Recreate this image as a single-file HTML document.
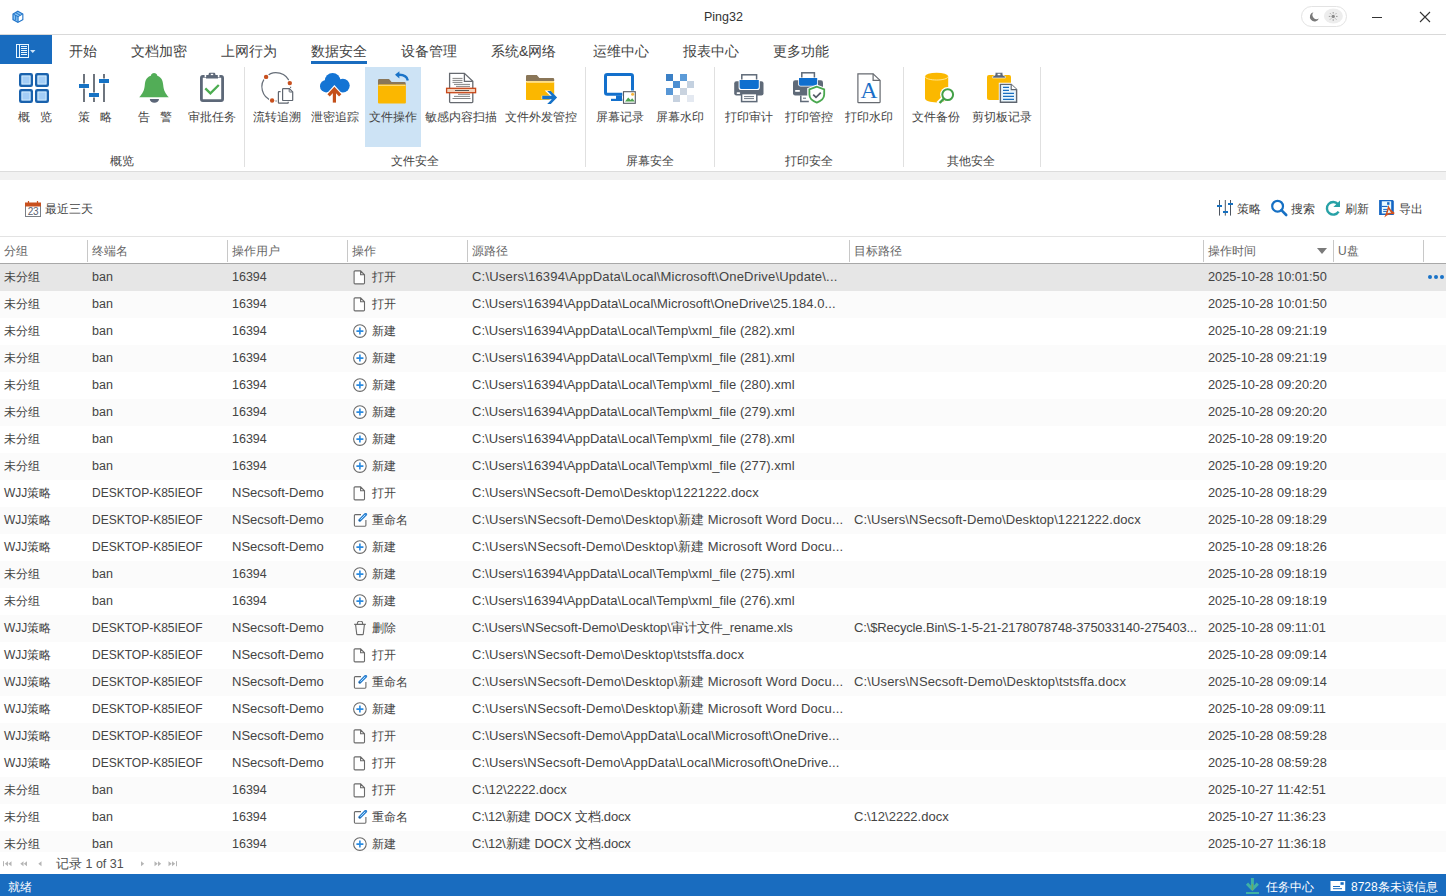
<!DOCTYPE html>
<html><head><meta charset="utf-8"><title>Ping32</title>
<style>
*{box-sizing:border-box;margin:0;padding:0}
html,body{width:1446px;height:896px;overflow:hidden;background:#fff;font-family:"Liberation Sans",sans-serif;color:#333}
.abs{position:absolute}
#title{position:absolute;left:0;top:0;width:1446px;height:35px;background:#fff;border-bottom:1px solid #d9d9d9}
#tabs{position:absolute;left:0;top:35px;width:1446px;height:29px;background:#fff}
.tab{position:absolute;top:43px;font-size:14px;line-height:16px;color:#444;white-space:nowrap}
#filebtn{position:absolute;left:0;top:35px;width:52px;height:29px;background:#196cbf}
#ribbon{position:absolute;left:0;top:64px;width:1446px;height:108px;background:#fff;border-bottom:1px solid #dcdcdc}
.sep{position:absolute;top:67px;width:1px;height:100px;background:#e0e0e0}
.lbl{position:absolute;top:109px;font-size:12px;line-height:16px;color:#444;white-space:nowrap}
.glbl{position:absolute;top:153px;font-size:12px;line-height:16px;color:#444;white-space:nowrap}
.ico{position:absolute;top:70px}
#band{position:absolute;left:0;top:172px;width:1446px;height:8px;background:#f1f1f1}
#toolbar{position:absolute;left:0;top:180px;width:1446px;height:56px;background:#fff}
.tb{position:absolute;top:201px;font-size:12px;line-height:16px;color:#444;white-space:nowrap}
#thead{position:absolute;left:0;top:236px;width:1446px;height:28px;background:#fff;border-top:1px solid #e3e3e3;border-bottom:1px solid #a8a8a8}
.th{position:absolute;top:6px;font-size:12px;line-height:16px;color:#666;white-space:nowrap}
.hsep{position:absolute;top:3px;width:1px;height:22px;background:#c8c8c8}
.row{position:absolute;left:0;width:1446px;height:27px}
.c{position:absolute;top:5px;font-size:12.5px;line-height:16px;color:#444;white-space:pre}
.cp{font-size:13px}
.dk{font-size:12px}
.ns{font-size:13px}
.co{font-size:12px}
.cd{font-size:12.8px}
.cg{font-size:12px}
.rb{letter-spacing:-0.15px}
.ic{position:absolute;top:6px;line-height:0}
.dots{position:absolute;left:1428px;top:11px}
.dots i{display:inline-block;width:4px;height:4px;border-radius:2px;background:#1a73c8;margin-right:2px;vertical-align:top}
#rowsclip{position:absolute;left:0;top:264px;width:1446px;height:588px;overflow:hidden}
#rowsclip .row{}
#pager{position:absolute;left:0;top:852px;width:1446px;height:22px;background:#fff}
#status{position:absolute;left:0;top:874px;width:1446px;height:22px;background:#196cbf;color:#fff}
.st{position:absolute;top:5px;font-size:12px;line-height:16px;color:#fff;white-space:nowrap}
</style></head>
<body>
<div id="title">
  <svg class="abs" style="left:0;top:0" width="30" height="30" viewBox="0 0 30 30"><path d="M17.9 11.2L22.8 14V19.6L17.9 22.4L13 19.6V14Z" fill="#86c3f4" stroke="#2374c8" stroke-width="1.2"/><path d="M18.6 16.6L22.2 14.6V19.2L18.6 21.3Z" fill="#fff"/><path d="M15.7 15.2v5M18 16.4v5.6M13.4 14.2l4.6 2.4l4.6-2.5M15.5 12.6l4.6 2.6" fill="none" stroke="#2374c8" stroke-width="1"/></svg>
  <div class="abs" style="left:704px;top:9px;font-size:12.5px;line-height:16px;color:#333">Ping32</div>
  <div class="abs" style="left:1301px;top:6px;width:46px;height:21px;border:1px solid #e3e3e3;border-radius:11px;background:#fff"></div>
  <svg class="abs" style="left:1300px;top:0" width="50" height="34" viewBox="1300 0 50 34">
<ellipse cx="1333.4" cy="16" rx="9.5" ry="7.5" fill="#ededed"/>
<path d="M1313.4 12.2A4.7 4.7 0 1 0 1318.9 18.6A4.3 4.3 0 0 1 1313.4 12.2z" fill="#7a7a7a"/>
<circle cx="1333.2" cy="16.4" r="1.7" fill="#8a8a8a"/>
<g stroke="#9a9a9a" stroke-width="1"><path d="M1333.2 12v1.6M1333.2 19.2v1.6M1328.8 16.4h1.6M1336 16.4h1.6M1330.1 13.3l1 1M1335.3 18.5l1 1M1330.1 19.5l1-1M1335.3 14.3l1-1"/></g>
</svg>
<div class="abs" style="left:1372px;top:17px;width:10px;height:1px;background:#333"></div>
  <svg class="abs" style="left:1419px;top:11px" width="12" height="12" viewBox="0 0 12 12"><path d="M1 1L11 11M11 1L1 11" stroke="#333" stroke-width="1.1"/></svg>
</div>

<div id="tabs"></div>
<div id="filebtn">
  <svg class="abs" style="left:0;top:0" width="52" height="29" viewBox="0 35 52 29"><rect x="16.5" y="44.5" width="12" height="13" fill="none" stroke="#eaf8ff" stroke-width="1"/><path d="M19.5 45v12" stroke="#eaf8ff" stroke-width="1"/><path d="M21 46.5h6M21 48.5h6M21 50.5h6M21 52.5h6M21 54.5h6" stroke="#eaf8ff" stroke-width="1"/><path d="M30 50h5.5l-2.75 3z" fill="#cfe4f8"/></svg>
</div>
<div class="tab" style="left:69px">开始</div>
<div class="tab" style="left:131px">文档加密</div>
<div class="tab" style="left:221px">上网行为</div>
<div class="tab" style="left:311px">数据安全</div>
<div class="abs" style="left:311px;top:61px;width:56px;height:3px;background:#196cbf"></div>
<div class="tab" style="left:401px">设备管理</div>
<div class="tab" style="left:491px">系统&amp;网络</div>
<div class="tab" style="left:593px">运维中心</div>
<div class="tab" style="left:683px">报表中心</div>
<div class="tab" style="left:773px">更多功能</div>

<div id="ribbon"></div>
<div class="abs" style="left:365px;top:67px;width:56px;height:80px;background:#cde3f5"></div>
<div class="sep" style="left:244px"></div>
<div class="sep" style="left:585px"></div>
<div class="sep" style="left:714px"></div>
<div class="sep" style="left:903px"></div>
<div class="sep" style="left:1040px"></div>

<svg class="abs" style="left:0;top:0" width="1100" height="110" viewBox="0 0 1100 110">
<!-- 概览 grid -->
<g fill="#a3cdf6" stroke="#1a62ad" stroke-width="2.4">
<rect x="20.2" y="74.2" width="11.6" height="11.6" rx="1"/>
<rect x="36.2" y="74.2" width="11.6" height="11.6" rx="1"/>
<rect x="20.2" y="90.2" width="11.6" height="11.6" rx="1"/>
<rect x="36.2" y="90.2" width="11.6" height="11.6" rx="1"/>
</g>
<g fill="none" stroke="#d8f1ff" stroke-width="0.8">
<rect x="22" y="76" width="8" height="8"/><rect x="38" y="76" width="8" height="8"/>
<rect x="22" y="92" width="8" height="8"/><rect x="38" y="92" width="8" height="8"/>
</g>
<!-- 策略 sliders -->
<g stroke="#5f6670" stroke-width="1.8">
<path d="M84 74v9.5M84 88.5v13.5M94 74v18.5M94 97.5v4.5M104 74v4.5M104 83.5v18.5"/>
</g>
<g fill="#1672c4">
<rect x="79" y="84" width="10" height="4"/>
<rect x="89" y="93" width="10" height="4"/>
<rect x="99" y="79" width="10" height="4"/>
</g>
<!-- 告警 bell -->
<path d="M154 73.2c-1.3 0-2.3 0.9-2.4 2.3c-4.6 1.2-6.4 4.5-6.8 9.4c-0.5 5.6-2.2 8.6-5.6 12.3h29.6c-3.4-3.7-5.1-6.7-5.6-12.3c-0.4-4.9-2.2-8.2-6.8-9.4c-0.1-1.4-1.1-2.3-2.4-2.3z" fill="#52ad57"/>
<circle cx="154.1" cy="76.4" r="3.2" fill="#52ad57"/>
<path d="M149.8 99.1h9.2a4.6 3.6 0 0 1-9.2 0z" fill="#5b6678"/>
<!-- 审批任务 clipboard -->
<rect x="201.4" y="76.4" width="21.2" height="24.2" rx="1.5" fill="#fff" stroke="#5d6878" stroke-width="2.8"/>
<rect x="204.6" y="74.6" width="1.6" height="2.6" fill="#fff"/>
<rect x="217.8" y="74.6" width="1.6" height="2.6" fill="#fff"/>
<path d="M206 78.4H218V77.2L215.6 75.6L215.2 73.5Q215 72.7 214.3 72.7H209.7Q209 72.7 208.8 73.5L208.4 75.6L206 77.2Z" fill="#5d6878"/>
<rect x="210.8" y="73.8" width="2.4" height="1.3" fill="#fff"/>
<path d="M205.3 88.4l5.1 5 8.4-8.4" fill="none" stroke="#4cad50" stroke-width="2.3"/>
<!-- 流转追溯 -->
<path d="M272.1 100.5A14.2 14.2 0 1 1 289.8 83.1" fill="none" stroke="#666e78" stroke-width="1.25"/>
<g fill="#fff"><circle cx="266.1" cy="76.9" r="3.2"/><circle cx="289.8" cy="83.1" r="3.2"/><circle cx="272.1" cy="100.5" r="3.2"/></g>
<g fill="#c8501e"><circle cx="266.1" cy="76.9" r="2.2"/><circle cx="289.8" cy="83.1" r="2.2"/><circle cx="272.1" cy="100.5" r="2.2"/></g>
<path d="M290.6 86.8v1.2M275.4 101h1.4" stroke="#666e78" stroke-width="1.1"/>
<path d="M280.6 91.6h-1.6a0.6 0.6 0 0 0-0.6 0.6v10.4a0.6 0.6 0 0 0 0.6 0.6h8.6a0.6 0.6 0 0 0 0.6-0.6v-0.8" fill="none" stroke="#5f6670" stroke-width="1.2"/>
<path d="M283.2 88.6h6.2l3.3 3.3v8a0.6 0.6 0 0 1-0.6 0.6h-8.9a0.6 0.6 0 0 1-0.6-0.6v-10.7a0.6 0.6 0 0 1 0.6-0.6z" fill="#fff" stroke="#5f6670" stroke-width="1.2"/>
<path d="M289.2 88.8v2.6a0.6 0.6 0 0 0 0.6 0.6h2.6" fill="none" stroke="#5f6670" stroke-width="1"/>
<!-- 泄密追踪 cloud -->
<g fill="#1474d4">
<circle cx="332.6" cy="80.8" r="7.8"/>
<circle cx="342.8" cy="85.6" r="6.9"/>
<circle cx="326.2" cy="86.2" r="6.2"/>
<rect x="326" y="84" width="17" height="8" rx="3"/>
</g>
<path d="M327.6 96.6L334.4 89.2L341.2 96.6M334.4 90v4" fill="none" stroke="#fff" stroke-width="5.6" stroke-linejoin="miter" stroke-miterlimit="10"/>
<path d="M328.6 95.4L334.4 89.2L340.2 95.4" fill="none" stroke="#c4501a" stroke-width="3.2" stroke-linejoin="miter" stroke-miterlimit="10"/>
<path d="M334.4 89v13.6" stroke="#c4501a" stroke-width="3.2"/>
<!-- 文件操作 folder -->
<path d="M378 80.2a1.2 1.2 0 0 1 1.2-1.2h9.8l2.6 3h12.9a1.2 1.2 0 0 1 1.2 1.2v2h-27.7z" fill="#8a7658"/>
<rect x="378" y="84.6" width="27.9" height="18.8" rx="1" fill="#fbb700"/>
<rect x="378.5" y="84.8" width="27" height="0.9" fill="#ffe9a8"/>
<path d="M407.8 80.4c-0.8-3.6-3.6-5.6-8.4-5.6h-2.6" fill="none" stroke="#1a73c8" stroke-width="2.4"/>
<path d="M395 74.8l4.4-3.6v7.2z" fill="#1a73c8"/>
<!-- 敏感内容扫描 -->
<path d="M449.6 73.4h14.8l8.4 8v20.4a0.8 0.8 0 0 1-0.8 0.8h-21.6a0.8 0.8 0 0 1-0.8-0.8z" fill="#fff" stroke="#666a70" stroke-width="1.3"/>
<path d="M464.4 73.4v8h8.4" fill="none" stroke="#666a70" stroke-width="1.3"/>
<g stroke="#777" stroke-width="0.9"><path d="M452.5 78.4h10M452.5 80.4h10M452.5 82.4h10M454 84.4h16M456 86.4h14M458 94.3h12M454 96.4h16M452.5 98.5h18"/></g>
<rect x="446.6" y="88.3" width="29" height="4.4" fill="#f2d2bb" stroke="#c8481a" stroke-width="1.3"/>
<path d="M455 90.5h14" stroke="#555" stroke-width="1"/>
<!-- 文件外发管控 -->
<path d="M526 76.2a1.2 1.2 0 0 1 1.2-1.2h9.6l2.6 3h13.6a1.2 1.2 0 0 1 1.2 1.2v1.8h-28.2z" fill="#8a7658"/>
<rect x="526" y="81.6" width="28.2" height="18.4" rx="0.8" fill="#fbb700"/>
<rect x="526.5" y="81.8" width="27.4" height="0.9" fill="#ffe9a8"/>
<path d="M541.6 99.3h8.5l-5.4 5.2h5.2l7.6-7-7.6-7h-5.2l5.4 5.2h-8.5z" fill="#fff"/>
<path d="M542.2 95.8h9.6l-4.6-4.7h3.6l6.3 6.4-6.3 6.4h-3.6l4.6-4.7h-9.6z" fill="#1672c8"/>
<!-- 屏幕记录 monitor -->
<rect x="605.5" y="74.5" width="27" height="19.8" rx="1.8" fill="#fff" stroke="#1370cc" stroke-width="3"/>
<rect x="616" y="95.5" width="6" height="3.5" fill="#1370cc"/>
<rect x="611" y="98.8" width="12" height="2.2" fill="#1370cc"/>
<rect x="622.3" y="90.5" width="14" height="13.6" fill="#fff"/>
<rect x="623.5" y="91.7" width="11.8" height="11.6" fill="#fff" stroke="#555b64" stroke-width="1.1"/>
<circle cx="632.6" cy="94.2" r="1.5" fill="#f6b53a"/>
<path d="M625 101.6l3.2-4.2 2.4 2.6 1.6-1.8 2.6 3.4z" fill="#4ea34f"/>
<!-- 屏幕水印 checker -->
<rect x="666" y="74" width="7" height="7" fill="#3b80c6"/>
<rect x="680" y="74" width="7" height="7" fill="#5c9bd8"/>
<rect x="673" y="81" width="7" height="7" fill="#4d8fd2"/>
<rect x="687" y="81" width="7" height="7" fill="#c4d1e0"/>
<rect x="666" y="88" width="7" height="7" fill="#5897d6"/>
<rect x="680" y="88" width="7" height="7" fill="#c9d3df"/>
<rect x="673" y="95" width="7" height="7" fill="#c6d1df"/>
<rect x="687" y="95" width="7" height="7" fill="#e4e9f1"/>
<!-- 打印审计 printer -->
<rect x="741.8" y="74.8" width="14.8" height="7" fill="#fff" stroke="#5f6a78" stroke-width="1.5"/>
<rect x="734.2" y="81.3" width="29.3" height="14.1" rx="2.2" fill="#5f6a78"/>
<path d="M738.6 79.4h21.2v8a2.6 2.6 0 0 1-2.6 2.6h-16a2.6 2.6 0 0 1-2.6-2.6z" fill="#fff"/>
<path d="M739.6 80h19.2v7.2a1.8 1.8 0 0 1-1.8 1.8h-15.6a1.8 1.8 0 0 1-1.8-1.8z" fill="#0f6fcf"/>
<rect x="736.6" y="92.2" width="3.6" height="1.8" rx="0.8" fill="#fff"/>
<rect x="741.6" y="93.6" width="15.2" height="8" fill="#fff" stroke="#5f6a78" stroke-width="1.5"/>
<path d="M744 96.6h10M744 98.6h10" stroke="#5f6a78" stroke-width="0.9"/>
<!-- 打印管控 printer + shield -->
<rect x="801.8" y="72.8" width="12.6" height="7" fill="#fff" stroke="#5f6a78" stroke-width="1.5"/>
<rect x="793" y="80.2" width="30" height="15.2" rx="2.2" fill="#5f6a78"/>
<path d="M798.2 77.4h19.8v6.8a2.4 2.4 0 0 1-2.4 2.4h-15a2.4 2.4 0 0 1-2.4-2.4z" fill="#fff"/>
<path d="M799 78h18.2v6.2a1.6 1.6 0 0 1-1.6 1.6h-15a1.6 1.6 0 0 1-1.6-1.6z" fill="#0f6fcf"/>
<rect x="795.2" y="90" width="4.6" height="1.8" fill="#fff"/>
<path d="M800.8 95.4v6.2h8" fill="none" stroke="#5f6a78" stroke-width="1.5"/>
<path d="M803 98.2h3" stroke="#5f6a78" stroke-width="1"/>
<path d="M816.8 84.6l-9.6 3.6v6.2c0 5 4 8.2 9.6 10.2c5.6-2 9.6-5.2 9.6-10.2v-6.2z" fill="#fff"/>
<path d="M816.8 86.6l-7.4 2.8v5.2c0 3.8 3 6.4 7.4 8c4.4-1.6 7.4-4.2 7.4-8v-5.2z" fill="#fff" stroke="#4aa84f" stroke-width="1.8"/>
<path d="M813.2 94.6l2.8 2.8 4.8-4.8" fill="none" stroke="#555b68" stroke-width="1.7"/>
<!-- 打印水印 doc A -->
<path d="M857.9 73.8h15.2l7 6.6v21.6a0.6 0.6 0 0 1-0.6 0.6h-21a0.6 0.6 0 0 1-0.6-0.6z" fill="#fff" stroke="#666a70" stroke-width="1.2"/>
<path d="M873.1 73.8v6.6h7" fill="none" stroke="#666a70" stroke-width="1.2"/>
<text x="869" y="97.8" text-anchor="middle" font-family="Liberation Serif" font-size="23.5" fill="#1a6fc8">A</text>
<!-- 文件备份 database -->
<path d="M925 76.4v22.2c0 2.2 5.2 3.8 11.6 3.8s11.6-1.6 11.6-3.8v-22.2z" fill="#fbb800"/>
<ellipse cx="936.6" cy="76.4" rx="11.6" ry="3.6" fill="#fbb800"/>
<path d="M925.2 76.6c0 2 5.2 3.4 11.4 3.4s11.4-1.4 11.4-3.4" fill="none" stroke="#ffeaa0" stroke-width="0.9"/>
<circle cx="947.7" cy="94.6" r="7.6" fill="#fff"/>
<path d="M938 103.6l5-5" stroke="#fff" stroke-width="4.5"/>
<circle cx="947.7" cy="94.6" r="5.4" fill="#fff" stroke="#43a047" stroke-width="2"/>
<path d="M939.6 103l4.4-4.4" stroke="#43a047" stroke-width="2.4"/>
<!-- 剪切板记录 -->
<rect x="987" y="75" width="24" height="25" rx="2" fill="#fbb800"/>
<path d="M992.6 78h12.8v-1.6l-2.5-1.2v-1.4a1.2 1.2 0 0 0-1.2-1.2h-5.4a1.2 1.2 0 0 0-1.2 1.2v1.4l-2.5 1.2z" fill="#5d6878" stroke="#fff" stroke-width="0.6"/>
<rect x="997.6" y="73.8" width="2.8" height="1.4" fill="#fff"/>
<path d="M998.8 82.8h12.8l6.2 6v14.6h-19z" fill="#fff"/>
<path d="M1000.4 84.4h10.8l5.4 5.2v12.6h-16.2z" fill="#eaf6fd" stroke="#5f6670" stroke-width="1.4"/>
<path d="M1011.2 84.4v5.2h5.4" fill="#fff" stroke="#5f6670" stroke-width="1.1"/>
<g stroke="#1a6fc0" stroke-width="1.2"><path d="M1003 87.4h6M1003 90.4h6M1003 93.4h11M1003 96.4h11M1003 99.4h11"/></g>
</svg>


<div class="lbl" style="left:18px">概&nbsp;&nbsp;&nbsp;览</div>
<div class="lbl" style="left:78px">策&nbsp;&nbsp;&nbsp;略</div>
<div class="lbl" style="left:138px">告&nbsp;&nbsp;&nbsp;警</div>
<div class="lbl" style="left:188px">审批任务</div>
<div class="lbl" style="left:253px">流转追溯</div>
<div class="lbl" style="left:311px">泄密追踪</div>
<div class="lbl" style="left:369px">文件操作</div>
<div class="lbl" style="left:425px">敏感内容扫描</div>
<div class="lbl" style="left:505px">文件外发管控</div>
<div class="lbl" style="left:596px">屏幕记录</div>
<div class="lbl" style="left:656px">屏幕水印</div>
<div class="lbl" style="left:725px">打印审计</div>
<div class="lbl" style="left:785px">打印管控</div>
<div class="lbl" style="left:845px">打印水印</div>
<div class="lbl" style="left:912px">文件备份</div>
<div class="lbl" style="left:972px">剪切板记录</div>

<div class="glbl" style="left:110px">概览</div>
<div class="glbl" style="left:391px">文件安全</div>
<div class="glbl" style="left:626px">屏幕安全</div>
<div class="glbl" style="left:785px">打印安全</div>
<div class="glbl" style="left:947px">其他安全</div>

<div id="band"></div>
<div id="toolbar"></div>
<svg class="abs" style="left:0;top:180px" width="1446" height="56" viewBox="0 180 1446 56">
<!-- calendar -->
<rect x="25.5" y="203.5" width="15" height="13" fill="#fff" stroke="#7a7f86" stroke-width="1"/>
<rect x="25" y="202.5" width="16" height="4" fill="#c8501e"/>
<path d="M28.5 201v3M37.5 201v3" stroke="#c8501e" stroke-width="1.2"/>
<text x="33" y="215.2" text-anchor="middle" font-family="Liberation Sans" font-size="10" fill="#5a6270" letter-spacing="-0.3">23</text>
<!-- sliders small -->
<g stroke="#4d5560" stroke-width="1"><path d="M1219.5 200v15.6M1225.3 200v15.6M1230.5 200v15.6"/></g>
<g fill="#1670c0"><rect x="1217" y="205" width="5" height="2"/><rect x="1223" y="211" width="5" height="2"/><rect x="1228" y="203" width="5" height="2"/></g>
<!-- search -->
<circle cx="1277.6" cy="206.2" r="5.4" fill="none" stroke="#1670c4" stroke-width="2.2"/>
<path d="M1281.4 210.2l4.8 4.8" stroke="#1670c4" stroke-width="2.6" stroke-linecap="round"/>
<!-- refresh -->
<path d="M1338 204.2A6.3 6.3 0 1 0 1338.6 211.6" fill="none" stroke="#27a1a6" stroke-width="2.4"/>
<path d="M1340 200.4v6.6h-6.6z" fill="#27a1a6"/>
<!-- export floppy -->
<path d="M1379.1 200h13.6l1.1 1.1v13.9h-14.7z" fill="#1466c4"/>
<rect x="1381.8" y="201.3" width="9.4" height="12.2" fill="#e9fbff"/>
<rect x="1381.8" y="205.9" width="5.8" height="1.1" fill="#1466c4"/>
<rect x="1387.1" y="202.2" width="2.4" height="2.6" fill="#1466c4"/>
<path d="M1383.2 209.4h4.4M1383.2 211.4h4" stroke="#1466c4" stroke-width="1"/>
<path d="M1386 215.2C1387.2 212 1388 209.4 1388.5 207.4C1389.5 209.8 1391.6 212.2 1394.2 213.5C1391.4 213 1388.2 213.4 1386 215.2z" fill="none" stroke="#d4521c" stroke-width="1.5"/>
</svg>
<div class="tb" style="left:45px">最近三天</div>
<div class="tb" style="left:1237px">策略</div>
<div class="tb" style="left:1291px">搜索</div>
<div class="tb" style="left:1345px">刷新</div>
<div class="tb" style="left:1399px">导出</div>


<div id="thead">
  <div class="th" style="left:4px">分组</div>
  <div class="hsep" style="left:87px"></div>
  <div class="th" style="left:92px">终端名</div>
  <div class="hsep" style="left:227px"></div>
  <div class="th" style="left:232px">操作用户</div>
  <div class="hsep" style="left:347px"></div>
  <div class="th" style="left:352px">操作</div>
  <div class="hsep" style="left:467px"></div>
  <div class="th" style="left:472px">源路径</div>
  <div class="hsep" style="left:849px"></div>
  <div class="th" style="left:854px">目标路径</div>
  <div class="hsep" style="left:1203px"></div>
  <div class="th" style="left:1208px">操作时间</div>
  <svg class="abs" style="left:1317px;top:11px" width="10" height="6" viewBox="0 0 10 6"><path d="M0 0h10L5 6z" fill="#7a7a7a"/></svg>
  <div class="hsep" style="left:1333px"></div>
  <div class="th" style="left:1338px">U盘</div>
  <div class="hsep" style="left:1423px"></div>
</div>

<div id="rowsclip"><div style="position:absolute;left:0;top:-264px">
<div class="row" style="top:264px;background:#e6e6e6"><span class="c cg" style="left:4px">未分组</span><span class="c ct" style="left:92px">ban</span><span class="c cu" style="left:232px">16394</span><span class="ic" style="left:352px"><svg width="16" height="16" viewBox="0 0 16 16"><path d="M3 0.9h5.6l3.9 3.9v8.2a0.9 0.9 0 0 1-0.9 0.9h-8.6a0.9 0.9 0 0 1-0.9-0.9v-11.2a0.9 0.9 0 0 1 0.9-0.9z M8.6 0.9v3.9h3.9" fill="#fff" stroke="#6a6a6a" stroke-width="1.1"/></svg></span><span class="c co" style="left:372px">打开</span><span class="c cp" style="left:472px;letter-spacing:0.198px">C:\Users\16394\AppData\Local\Microsoft\OneDrive\Update\...</span><span class="c cd" style="left:1208px">2025-10-28 10:01:50</span><span class="dots"><i></i><i></i><i></i></span></div>
<div class="row" style="top:291px;background:#fbfbfb"><span class="c cg" style="left:4px">未分组</span><span class="c ct" style="left:92px">ban</span><span class="c cu" style="left:232px">16394</span><span class="ic" style="left:352px"><svg width="16" height="16" viewBox="0 0 16 16"><path d="M3 0.9h5.6l3.9 3.9v8.2a0.9 0.9 0 0 1-0.9 0.9h-8.6a0.9 0.9 0 0 1-0.9-0.9v-11.2a0.9 0.9 0 0 1 0.9-0.9z M8.6 0.9v3.9h3.9" fill="#fff" stroke="#6a6a6a" stroke-width="1.1"/></svg></span><span class="c co" style="left:372px">打开</span><span class="c cp" style="left:472px;letter-spacing:0.076px">C:\Users\16394\AppData\Local\Microsoft\OneDrive\25.184.0...</span><span class="c cd" style="left:1208px">2025-10-28 10:01:50</span></div>
<div class="row" style="top:318px;background:#ffffff"><span class="c cg" style="left:4px">未分组</span><span class="c ct" style="left:92px">ban</span><span class="c cu" style="left:232px">16394</span><span class="ic" style="left:352px"><svg width="16" height="16" viewBox="0 0 16 16"><circle cx="7.9" cy="7.1" r="6.3" fill="#fff" stroke="#6a6a6a" stroke-width="1.1"/><path d="M7.9 3.6v7M4.4 7.1h7" stroke="#2a8ae0" stroke-width="1.6"/></svg></span><span class="c co" style="left:372px">新建</span><span class="c cp" style="left:472px;letter-spacing:0.048px">C:\Users\16394\AppData\Local\Temp\xml_file (282).xml</span><span class="c cd" style="left:1208px">2025-10-28 09:21:19</span></div>
<div class="row" style="top:345px;background:#fbfbfb"><span class="c cg" style="left:4px">未分组</span><span class="c ct" style="left:92px">ban</span><span class="c cu" style="left:232px">16394</span><span class="ic" style="left:352px"><svg width="16" height="16" viewBox="0 0 16 16"><circle cx="7.9" cy="7.1" r="6.3" fill="#fff" stroke="#6a6a6a" stroke-width="1.1"/><path d="M7.9 3.6v7M4.4 7.1h7" stroke="#2a8ae0" stroke-width="1.6"/></svg></span><span class="c co" style="left:372px">新建</span><span class="c cp" style="left:472px;letter-spacing:0.048px">C:\Users\16394\AppData\Local\Temp\xml_file (281).xml</span><span class="c cd" style="left:1208px">2025-10-28 09:21:19</span></div>
<div class="row" style="top:372px;background:#ffffff"><span class="c cg" style="left:4px">未分组</span><span class="c ct" style="left:92px">ban</span><span class="c cu" style="left:232px">16394</span><span class="ic" style="left:352px"><svg width="16" height="16" viewBox="0 0 16 16"><circle cx="7.9" cy="7.1" r="6.3" fill="#fff" stroke="#6a6a6a" stroke-width="1.1"/><path d="M7.9 3.6v7M4.4 7.1h7" stroke="#2a8ae0" stroke-width="1.6"/></svg></span><span class="c co" style="left:372px">新建</span><span class="c cp" style="left:472px;letter-spacing:0.048px">C:\Users\16394\AppData\Local\Temp\xml_file (280).xml</span><span class="c cd" style="left:1208px">2025-10-28 09:20:20</span></div>
<div class="row" style="top:399px;background:#fbfbfb"><span class="c cg" style="left:4px">未分组</span><span class="c ct" style="left:92px">ban</span><span class="c cu" style="left:232px">16394</span><span class="ic" style="left:352px"><svg width="16" height="16" viewBox="0 0 16 16"><circle cx="7.9" cy="7.1" r="6.3" fill="#fff" stroke="#6a6a6a" stroke-width="1.1"/><path d="M7.9 3.6v7M4.4 7.1h7" stroke="#2a8ae0" stroke-width="1.6"/></svg></span><span class="c co" style="left:372px">新建</span><span class="c cp" style="left:472px;letter-spacing:0.048px">C:\Users\16394\AppData\Local\Temp\xml_file (279).xml</span><span class="c cd" style="left:1208px">2025-10-28 09:20:20</span></div>
<div class="row" style="top:426px;background:#ffffff"><span class="c cg" style="left:4px">未分组</span><span class="c ct" style="left:92px">ban</span><span class="c cu" style="left:232px">16394</span><span class="ic" style="left:352px"><svg width="16" height="16" viewBox="0 0 16 16"><circle cx="7.9" cy="7.1" r="6.3" fill="#fff" stroke="#6a6a6a" stroke-width="1.1"/><path d="M7.9 3.6v7M4.4 7.1h7" stroke="#2a8ae0" stroke-width="1.6"/></svg></span><span class="c co" style="left:372px">新建</span><span class="c cp" style="left:472px;letter-spacing:0.048px">C:\Users\16394\AppData\Local\Temp\xml_file (278).xml</span><span class="c cd" style="left:1208px">2025-10-28 09:19:20</span></div>
<div class="row" style="top:453px;background:#fbfbfb"><span class="c cg" style="left:4px">未分组</span><span class="c ct" style="left:92px">ban</span><span class="c cu" style="left:232px">16394</span><span class="ic" style="left:352px"><svg width="16" height="16" viewBox="0 0 16 16"><circle cx="7.9" cy="7.1" r="6.3" fill="#fff" stroke="#6a6a6a" stroke-width="1.1"/><path d="M7.9 3.6v7M4.4 7.1h7" stroke="#2a8ae0" stroke-width="1.6"/></svg></span><span class="c co" style="left:372px">新建</span><span class="c cp" style="left:472px;letter-spacing:0.048px">C:\Users\16394\AppData\Local\Temp\xml_file (277).xml</span><span class="c cd" style="left:1208px">2025-10-28 09:19:20</span></div>
<div class="row" style="top:480px;background:#ffffff"><span class="c cg" style="left:4px">WJJ策略</span><span class="c ct dk" style="left:92px">DESKTOP-K85IEOF</span><span class="c cu ns" style="left:232px">NSecsoft-Demo</span><span class="ic" style="left:352px"><svg width="16" height="16" viewBox="0 0 16 16"><path d="M3 0.9h5.6l3.9 3.9v8.2a0.9 0.9 0 0 1-0.9 0.9h-8.6a0.9 0.9 0 0 1-0.9-0.9v-11.2a0.9 0.9 0 0 1 0.9-0.9z M8.6 0.9v3.9h3.9" fill="#fff" stroke="#6a6a6a" stroke-width="1.1"/></svg></span><span class="c co" style="left:372px">打开</span><span class="c cp" style="left:472px;letter-spacing:0.098px">C:\Users\NSecsoft-Demo\Desktop\1221222.docx</span><span class="c cd" style="left:1208px">2025-10-28 09:18:29</span></div>
<div class="row" style="top:507px;background:#fbfbfb"><span class="c cg" style="left:4px">WJJ策略</span><span class="c ct dk" style="left:92px">DESKTOP-K85IEOF</span><span class="c cu ns" style="left:232px">NSecsoft-Demo</span><span class="ic" style="left:352px"><svg width="16" height="16" viewBox="0 0 16 16"><path d="M9 1.6H3.3a0.9 0.9 0 0 0-0.9 0.9v9.8a0.9 0.9 0 0 0 0.9 0.9h9.7a0.9 0.9 0 0 0 0.9-0.9V7" fill="#fff" stroke="#6a6a6a" stroke-width="1.1"/><path d="M7.8 7.2L13.6 1.4" stroke="#2a7fd0" stroke-width="3" stroke-linecap="round"/><path d="M8.4 6.6L13.2 1.8" stroke="#aee0ff" stroke-width="1"/><path d="M7 8.2l0.6-1.6 1 1z" fill="#3a4a5a"/></svg></span><span class="c co" style="left:372px">重命名</span><span class="c cp" style="left:472px;letter-spacing:0.157px">C:\Users\NSecsoft-Demo\Desktop\新建 Microsoft Word Docu...</span><span class="c cp" style="left:854px;letter-spacing:0.098px">C:\Users\NSecsoft-Demo\Desktop\1221222.docx</span><span class="c cd" style="left:1208px">2025-10-28 09:18:29</span></div>
<div class="row" style="top:534px;background:#ffffff"><span class="c cg" style="left:4px">WJJ策略</span><span class="c ct dk" style="left:92px">DESKTOP-K85IEOF</span><span class="c cu ns" style="left:232px">NSecsoft-Demo</span><span class="ic" style="left:352px"><svg width="16" height="16" viewBox="0 0 16 16"><circle cx="7.9" cy="7.1" r="6.3" fill="#fff" stroke="#6a6a6a" stroke-width="1.1"/><path d="M7.9 3.6v7M4.4 7.1h7" stroke="#2a8ae0" stroke-width="1.6"/></svg></span><span class="c co" style="left:372px">新建</span><span class="c cp" style="left:472px;letter-spacing:0.157px">C:\Users\NSecsoft-Demo\Desktop\新建 Microsoft Word Docu...</span><span class="c cd" style="left:1208px">2025-10-28 09:18:26</span></div>
<div class="row" style="top:561px;background:#fbfbfb"><span class="c cg" style="left:4px">未分组</span><span class="c ct" style="left:92px">ban</span><span class="c cu" style="left:232px">16394</span><span class="ic" style="left:352px"><svg width="16" height="16" viewBox="0 0 16 16"><circle cx="7.9" cy="7.1" r="6.3" fill="#fff" stroke="#6a6a6a" stroke-width="1.1"/><path d="M7.9 3.6v7M4.4 7.1h7" stroke="#2a8ae0" stroke-width="1.6"/></svg></span><span class="c co" style="left:372px">新建</span><span class="c cp" style="left:472px;letter-spacing:0.048px">C:\Users\16394\AppData\Local\Temp\xml_file (275).xml</span><span class="c cd" style="left:1208px">2025-10-28 09:18:19</span></div>
<div class="row" style="top:588px;background:#ffffff"><span class="c cg" style="left:4px">未分组</span><span class="c ct" style="left:92px">ban</span><span class="c cu" style="left:232px">16394</span><span class="ic" style="left:352px"><svg width="16" height="16" viewBox="0 0 16 16"><circle cx="7.9" cy="7.1" r="6.3" fill="#fff" stroke="#6a6a6a" stroke-width="1.1"/><path d="M7.9 3.6v7M4.4 7.1h7" stroke="#2a8ae0" stroke-width="1.6"/></svg></span><span class="c co" style="left:372px">新建</span><span class="c cp" style="left:472px;letter-spacing:0.048px">C:\Users\16394\AppData\Local\Temp\xml_file (276).xml</span><span class="c cd" style="left:1208px">2025-10-28 09:18:19</span></div>
<div class="row" style="top:615px;background:#fbfbfb"><span class="c cg" style="left:4px">WJJ策略</span><span class="c ct dk" style="left:92px">DESKTOP-K85IEOF</span><span class="c cu ns" style="left:232px">NSecsoft-Demo</span><span class="ic" style="left:352px"><svg width="16" height="16" viewBox="0 0 16 16"><path d="M2.2 3.4h11.6M5.4 3.4v-1.2a1.9 1.9 0 0 1 1.9-1.9h1.4a1.9 1.9 0 0 1 1.9 1.9v1.2M3.6 3.6l1.1 9.3a0.8 0.8 0 0 0 0.8 0.7h5a0.8 0.8 0 0 0 0.8-0.7l1.1-9.3" fill="none" stroke="#6a6a6a" stroke-width="1.1"/></svg></span><span class="c co" style="left:372px">删除</span><span class="c cp" style="left:472px;letter-spacing:-0.065px">C:\Users\NSecsoft-Demo\Desktop\审计文件_rename.xls</span><span class="c cp rb" style="left:854px">C:\$Recycle.Bin\S-1-5-21-2178078748-375033140-275403...</span><span class="c cd" style="left:1208px">2025-10-28 09:11:01</span></div>
<div class="row" style="top:642px;background:#ffffff"><span class="c cg" style="left:4px">WJJ策略</span><span class="c ct dk" style="left:92px">DESKTOP-K85IEOF</span><span class="c cu ns" style="left:232px">NSecsoft-Demo</span><span class="ic" style="left:352px"><svg width="16" height="16" viewBox="0 0 16 16"><path d="M3 0.9h5.6l3.9 3.9v8.2a0.9 0.9 0 0 1-0.9 0.9h-8.6a0.9 0.9 0 0 1-0.9-0.9v-11.2a0.9 0.9 0 0 1 0.9-0.9z M8.6 0.9v3.9h3.9" fill="#fff" stroke="#6a6a6a" stroke-width="1.1"/></svg></span><span class="c co" style="left:372px">打开</span><span class="c cp" style="left:472px;letter-spacing:0.133px">C:\Users\NSecsoft-Demo\Desktop\tstsffa.docx</span><span class="c cd" style="left:1208px">2025-10-28 09:09:14</span></div>
<div class="row" style="top:669px;background:#fbfbfb"><span class="c cg" style="left:4px">WJJ策略</span><span class="c ct dk" style="left:92px">DESKTOP-K85IEOF</span><span class="c cu ns" style="left:232px">NSecsoft-Demo</span><span class="ic" style="left:352px"><svg width="16" height="16" viewBox="0 0 16 16"><path d="M9 1.6H3.3a0.9 0.9 0 0 0-0.9 0.9v9.8a0.9 0.9 0 0 0 0.9 0.9h9.7a0.9 0.9 0 0 0 0.9-0.9V7" fill="#fff" stroke="#6a6a6a" stroke-width="1.1"/><path d="M7.8 7.2L13.6 1.4" stroke="#2a7fd0" stroke-width="3" stroke-linecap="round"/><path d="M8.4 6.6L13.2 1.8" stroke="#aee0ff" stroke-width="1"/><path d="M7 8.2l0.6-1.6 1 1z" fill="#3a4a5a"/></svg></span><span class="c co" style="left:372px">重命名</span><span class="c cp" style="left:472px;letter-spacing:0.157px">C:\Users\NSecsoft-Demo\Desktop\新建 Microsoft Word Docu...</span><span class="c cp" style="left:854px;letter-spacing:0.133px">C:\Users\NSecsoft-Demo\Desktop\tstsffa.docx</span><span class="c cd" style="left:1208px">2025-10-28 09:09:14</span></div>
<div class="row" style="top:696px;background:#ffffff"><span class="c cg" style="left:4px">WJJ策略</span><span class="c ct dk" style="left:92px">DESKTOP-K85IEOF</span><span class="c cu ns" style="left:232px">NSecsoft-Demo</span><span class="ic" style="left:352px"><svg width="16" height="16" viewBox="0 0 16 16"><circle cx="7.9" cy="7.1" r="6.3" fill="#fff" stroke="#6a6a6a" stroke-width="1.1"/><path d="M7.9 3.6v7M4.4 7.1h7" stroke="#2a8ae0" stroke-width="1.6"/></svg></span><span class="c co" style="left:372px">新建</span><span class="c cp" style="left:472px;letter-spacing:0.157px">C:\Users\NSecsoft-Demo\Desktop\新建 Microsoft Word Docu...</span><span class="c cd" style="left:1208px">2025-10-28 09:09:11</span></div>
<div class="row" style="top:723px;background:#fbfbfb"><span class="c cg" style="left:4px">WJJ策略</span><span class="c ct dk" style="left:92px">DESKTOP-K85IEOF</span><span class="c cu ns" style="left:232px">NSecsoft-Demo</span><span class="ic" style="left:352px"><svg width="16" height="16" viewBox="0 0 16 16"><path d="M3 0.9h5.6l3.9 3.9v8.2a0.9 0.9 0 0 1-0.9 0.9h-8.6a0.9 0.9 0 0 1-0.9-0.9v-11.2a0.9 0.9 0 0 1 0.9-0.9z M8.6 0.9v3.9h3.9" fill="#fff" stroke="#6a6a6a" stroke-width="1.1"/></svg></span><span class="c co" style="left:372px">打开</span><span class="c cp" style="left:472px;letter-spacing:0.121px">C:\Users\NSecsoft-Demo\AppData\Local\Microsoft\OneDrive...</span><span class="c cd" style="left:1208px">2025-10-28 08:59:28</span></div>
<div class="row" style="top:750px;background:#ffffff"><span class="c cg" style="left:4px">WJJ策略</span><span class="c ct dk" style="left:92px">DESKTOP-K85IEOF</span><span class="c cu ns" style="left:232px">NSecsoft-Demo</span><span class="ic" style="left:352px"><svg width="16" height="16" viewBox="0 0 16 16"><path d="M3 0.9h5.6l3.9 3.9v8.2a0.9 0.9 0 0 1-0.9 0.9h-8.6a0.9 0.9 0 0 1-0.9-0.9v-11.2a0.9 0.9 0 0 1 0.9-0.9z M8.6 0.9v3.9h3.9" fill="#fff" stroke="#6a6a6a" stroke-width="1.1"/></svg></span><span class="c co" style="left:372px">打开</span><span class="c cp" style="left:472px;letter-spacing:0.121px">C:\Users\NSecsoft-Demo\AppData\Local\Microsoft\OneDrive...</span><span class="c cd" style="left:1208px">2025-10-28 08:59:28</span></div>
<div class="row" style="top:777px;background:#fbfbfb"><span class="c cg" style="left:4px">未分组</span><span class="c ct" style="left:92px">ban</span><span class="c cu" style="left:232px">16394</span><span class="ic" style="left:352px"><svg width="16" height="16" viewBox="0 0 16 16"><path d="M3 0.9h5.6l3.9 3.9v8.2a0.9 0.9 0 0 1-0.9 0.9h-8.6a0.9 0.9 0 0 1-0.9-0.9v-11.2a0.9 0.9 0 0 1 0.9-0.9z M8.6 0.9v3.9h3.9" fill="#fff" stroke="#6a6a6a" stroke-width="1.1"/></svg></span><span class="c co" style="left:372px">打开</span><span class="c cp" style="left:472px">C:\12\2222.docx</span><span class="c cd" style="left:1208px">2025-10-27 11:42:51</span></div>
<div class="row" style="top:804px;background:#ffffff"><span class="c cg" style="left:4px">未分组</span><span class="c ct" style="left:92px">ban</span><span class="c cu" style="left:232px">16394</span><span class="ic" style="left:352px"><svg width="16" height="16" viewBox="0 0 16 16"><path d="M9 1.6H3.3a0.9 0.9 0 0 0-0.9 0.9v9.8a0.9 0.9 0 0 0 0.9 0.9h9.7a0.9 0.9 0 0 0 0.9-0.9V7" fill="#fff" stroke="#6a6a6a" stroke-width="1.1"/><path d="M7.8 7.2L13.6 1.4" stroke="#2a7fd0" stroke-width="3" stroke-linecap="round"/><path d="M8.4 6.6L13.2 1.8" stroke="#aee0ff" stroke-width="1"/><path d="M7 8.2l0.6-1.6 1 1z" fill="#3a4a5a"/></svg></span><span class="c co" style="left:372px">重命名</span><span class="c cp" style="left:472px;letter-spacing:-0.190px">C:\12\新建 DOCX 文档.docx</span><span class="c cp" style="left:854px">C:\12\2222.docx</span><span class="c cd" style="left:1208px">2025-10-27 11:36:23</span></div>
<div class="row" style="top:831px;background:#fbfbfb"><span class="c cg" style="left:4px">未分组</span><span class="c ct" style="left:92px">ban</span><span class="c cu" style="left:232px">16394</span><span class="ic" style="left:352px"><svg width="16" height="16" viewBox="0 0 16 16"><circle cx="7.9" cy="7.1" r="6.3" fill="#fff" stroke="#6a6a6a" stroke-width="1.1"/><path d="M7.9 3.6v7M4.4 7.1h7" stroke="#2a8ae0" stroke-width="1.6"/></svg></span><span class="c co" style="left:372px">新建</span><span class="c cp" style="left:472px;letter-spacing:-0.190px">C:\12\新建 DOCX 文档.docx</span><span class="c cd" style="left:1208px">2025-10-27 11:36:18</span></div>
</div></div>

<div id="pager"><svg class="abs" style="left:0;top:0" width="200" height="22" viewBox="0 851.3 200 22">
<g fill="#b5b5b5">
<rect x="3" y="860.5" width="1" height="5"/><path d="M8 860.5v5l-3.2-2.5z M11.5 860.5v5l-3.2-2.5z"/>
<path d="M23.5 860.5v5l-3.2-2.5z M27 860.5v5l-3.2-2.5z"/>
<path d="M41.5 860.5v5l-3.2-2.5z"/>
<path d="M141 860.5v5l3.2-2.5z"/>
<path d="M154.5 860.5v5l3.2-2.5z M158 860.5v5l3.2-2.5z"/>
<path d="M168.5 860.5v5l3.2-2.5z M172 860.5v5l3.2-2.5z"/><rect x="176" y="860.5" width="1" height="5"/>
</g>
</svg>
<div class="abs" style="left:56px;top:4px;font-size:12.5px;line-height:16px;color:#505050;white-space:nowrap">记录 1 of 31</div>
</div>
<div id="status">
  <div class="st" style="left:8px">就绪</div>
  <svg class="abs" style="left:1240px;top:0" width="120" height="22" viewBox="1240 874 120 22">
<path d="M1252.4 878v12" stroke="#3fb1a4" stroke-width="3"/>
<path d="M1247 883.6l5.4 5.6 5.4-5.6" fill="none" stroke="#3fb1a4" stroke-width="3"/>
<path d="M1252.4 884v6" stroke="#6fa860" stroke-width="1.5"/>
<rect x="1246" y="892" width="13" height="2" fill="#3fb1a4"/>
<rect x="1330.5" y="881" width="14.7" height="10" fill="#fff"/>
<rect x="1340.5" y="882.2" width="3.2" height="2.6" fill="#196cbf"/>
<path d="M1333 886.5h7M1333 888.7h9" stroke="#196cbf" stroke-width="1"/>
</svg>
<div class="st" style="left:1266px">任务中心</div>
<div class="st" style="left:1351px;font-size:12px">8728条未读信息</div>

</div>
</body></html>
